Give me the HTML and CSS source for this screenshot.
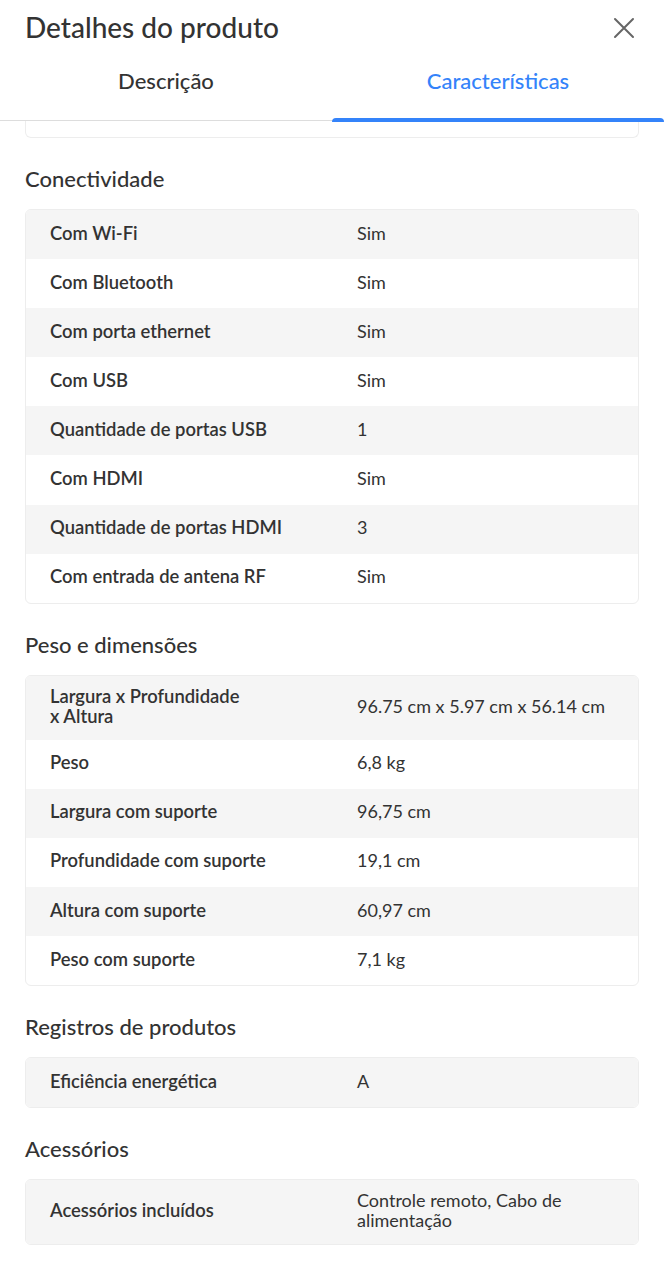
FILE: index.html
```html
<!DOCTYPE html>
<html lang="pt-BR">
<head>
<meta charset="utf-8">
<title>Detalhes do produto</title>
<link rel="stylesheet" href="styles.css">
</head>
<body>
<div class="modal">
  <header class="header">
    <div class="title-row">
      <h1 class="title">Detalhes do produto</h1>
      <button class="close" aria-label="Fechar">
        <svg width="22" height="22" viewBox="0 0 22 22"><path d="M2 2L20 20M20 2L2 20" stroke="#666" stroke-width="2" fill="none" stroke-linecap="round"/></svg>
      </button>
    </div>
    <nav class="tabs">
      <div class="tab">Descrição</div>
      <div class="tab tab-active">Características</div>
    </nav>
  </header>
  <main class="content">
    <div class="card card-tail"></div>

    <section class="section">
      <h2 class="section-title">Conectividade</h2>
      <div class="card">
        <div class="row"><span class="label">Com Wi-Fi</span><span class="value">Sim</span></div>
        <div class="row"><span class="label">Com Bluetooth</span><span class="value">Sim</span></div>
        <div class="row"><span class="label">Com porta ethernet</span><span class="value">Sim</span></div>
        <div class="row"><span class="label">Com USB</span><span class="value">Sim</span></div>
        <div class="row"><span class="label">Quantidade de portas USB</span><span class="value">1</span></div>
        <div class="row"><span class="label">Com HDMI</span><span class="value">Sim</span></div>
        <div class="row"><span class="label">Quantidade de portas HDMI</span><span class="value">3</span></div>
        <div class="row"><span class="label">Com entrada de antena RF</span><span class="value">Sim</span></div>
      </div>
    </section>

    <section class="section">
      <h2 class="section-title">Peso e dimensões</h2>
      <div class="card">
        <div class="row"><span class="label">Largura x Profundidade<br>x Altura</span><span class="value">96.75 cm x 5.97 cm x 56.14 cm</span></div>
        <div class="row"><span class="label">Peso</span><span class="value">6,8 kg</span></div>
        <div class="row"><span class="label">Largura com suporte</span><span class="value">96,75 cm</span></div>
        <div class="row"><span class="label">Profundidade com suporte</span><span class="value">19,1 cm</span></div>
        <div class="row"><span class="label">Altura com suporte</span><span class="value">60,97 cm</span></div>
        <div class="row"><span class="label">Peso com suporte</span><span class="value">7,1 kg</span></div>
      </div>
    </section>

    <section class="section">
      <h2 class="section-title">Registros de produtos</h2>
      <div class="card">
        <div class="row"><span class="label">Eficiência energética</span><span class="value">A</span></div>
      </div>
    </section>

    <section class="section">
      <h2 class="section-title">Acessórios</h2>
      <div class="card">
        <div class="row"><span class="label">Acessórios incluídos</span><span class="value">Controle remoto, Cabo de alimentação</span></div>
      </div>
    </section>
  </main>
</div>
</body>
</html>
```

FILE: styles.css
```css
* { box-sizing: border-box; }

html, body {
  margin: 0;
  padding: 0;
  background: #fff;
}

body {
  font-family: "Lato", "Liberation Sans", sans-serif;
  color: #333;
}

.modal {
  width: 664px;
  min-height: 1280px;
  background: #fff;
}

.header {
  background: #fff;
}

.title-row {
  height: 56px;
  padding: 0 29px 0 25px;
  display: flex;
  align-items: center;
  justify-content: space-between;
}

.title {
  margin: 0;
  font-size: 28px;
  font-weight: 500;
  line-height: 32px;
  color: #333;
  position: relative;
  top: -1px;
}

.close {
  border: 0;
  background: none;
  padding: 0;
  width: 22px;
  height: 22px;
  display: flex;
  align-items: center;
  justify-content: center;
  cursor: pointer;
}

.tabs {
  display: grid;
  grid-template-columns: 1fr 1fr;
  height: 65px;
  border-bottom: 1px solid #ddd;
}

.tab {
  display: flex;
  align-items: center;
  justify-content: center;
  font-size: 22px;
  font-weight: 500;
  color: #333;
  padding-top: 0;
  padding-bottom: 15px;
}

.tab-active {
  color: #3483fa;
  position: relative;
}

.tab-active::after {
  content: "";
  position: absolute;
  left: 0;
  right: 0;
  bottom: -2px;
  height: 4px;
  background: #3483fa;
  border-radius: 4px 4px 0 0;
}

.content {
  padding: 0 25px 40px;
}

.card {
  border: 1px solid #ededed;
  border-radius: 6px;
  overflow: hidden;
  background: #fff;
}

.card-tail {
  height: 17px;
  border-top: 0;
  border-top-left-radius: 0;
  border-top-right-radius: 0;
}

.section {
  margin-top: 29px;
}

.section-title {
  margin: 0 0 18px;
  font-size: 22px;
  line-height: 24px;
  font-weight: 500;
  color: #333;
}

.row {
  display: grid;
  grid-template-columns: 240px 1fr;
  column-gap: 67px;
  align-items: center;
  min-height: 49.1px;
  padding: 10px 24px 14px;
  font-size: 18px;
  line-height: 20px;
}

.row:nth-child(odd) {
  background: #f5f5f5;
}

.label {
  font-weight: 600;
  font-size: 18.4px;
  color: #333;
}

.value {
  font-weight: 400;
  color: #333;
}
```
